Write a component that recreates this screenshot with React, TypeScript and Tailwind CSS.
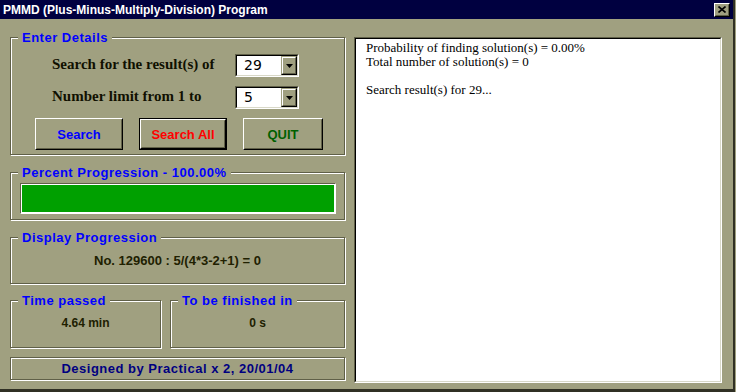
import type { ReactNode } from "react";

const sans = "font-['Liberation_Sans',Arial,sans-serif]";
const serif = "font-['Liberation_Serif','Times_New_Roman',serif]";

function Group({
  label,
  className,
  children,
}: {
  label?: string;
  className?: string;
  children?: ReactNode;
}) {
  return (
    <div
      className={`relative border border-[#606048] shadow-[inset_1px_1px_0_#fff,1px_1px_0_#fff] ${className ?? ""}`}
    >
      {label && (
        <span
          className={`absolute left-[7px] -top-[8px] bg-[#a0a080] px-[4px] text-[13px] leading-[15px] tracking-[0.5px] font-bold text-[#0000ff] whitespace-nowrap ${sans}`}
        >
          {label}
        </span>
      )}
      {children}
    </div>
  );
}

function Combo({ value }: { value: string }) {
  return (
    <div className="w-[64px] h-[23px] border border-t-[#606048] border-l-[#606048] border-b-white border-r-white">
      <div className="h-full flex border border-t-black border-l-black border-b-[#d8d8c8] border-r-[#d8d8c8] bg-white">
        <span className="flex-1 pl-[7px] text-[14px] leading-[19px] text-black font-['DejaVu_Sans',sans-serif]">
          {value}
        </span>
        <div className="w-[16px] h-full border border-t-[#a0a080] border-l-[#a0a080] border-b-black border-r-black">
          <div className="h-full flex items-center justify-center bg-[#a0a080] border border-t-white border-l-white border-b-[#606048] border-r-[#606048]">
            <svg width="7" height="4" viewBox="0 0 7 4">
              <polygon points="0,0 7,0 3.5,4" fill="#000" />
            </svg>
          </div>
        </div>
      </div>
    </div>
  );
}

function Button({
  text,
  color,
  width,
  isDefault,
}: {
  text: string;
  color: string;
  width: string;
  isDefault?: boolean;
}) {
  return (
    <div className={`${width} h-[32px] ${isDefault ? "border border-black" : ""}`}>
      <div className="h-full border border-t-white border-l-white border-b-black border-r-black">
        <div
          className={`h-full flex items-center justify-center border border-t-transparent border-l-transparent border-b-[#606048] border-r-[#606048] text-[13px] leading-[15px] font-bold ${sans} ${color}`}
        >
          {text}
        </div>
      </div>
    </div>
  );
}

export default function App() {
  return (
    <div className="w-[736px] h-[392px] bg-[#a0a080] overflow-hidden">
      <div className="w-[735px] h-[392px] border-r-2 border-b-[3px] border-[#303024] flex flex-col">
        {/* title bar */}
        <div className="h-[19px] bg-[#000040] flex items-center justify-between pl-[3px] pr-[3px]">
          <span className={`text-white text-[12px] leading-[14px] font-bold ${sans}`}>
            PMMD (Plus-Minus-Multiply-Division) Program
          </span>
          <div className="w-[16px] h-[14px] border border-t-white border-l-white border-b-black border-r-black">
            <div className="h-full flex items-center justify-center bg-[#a0a080] border border-t-transparent border-l-transparent border-b-[#606048] border-r-[#606048]">
              <svg width="8" height="7" viewBox="0 0 8 7">
                <path d="M0.5 0.5 L7.5 6.5 M7.5 0.5 L0.5 6.5" stroke="#000" strokeWidth="1.6" />
              </svg>
            </div>
          </div>
        </div>

        <div className="flex pt-[18px] pl-[10px]">
          {/* left column */}
          <div className="w-[335px] flex flex-col">
            <Group label="Enter Details" className="h-[118px] pt-[16px]">
              <div className="flex flex-col gap-[9px]">
                <div className="flex items-center h-[23px] pl-[41px]">
                  <span className={`w-[183px] pb-[3px] text-[15px] leading-[17px] font-bold text-[#101000] ${serif}`}>
                    Search for the result(s) of
                  </span>
                  <Combo value="29" />
                </div>
                <div className="flex items-center h-[23px] pl-[41px]">
                  <span className={`w-[183px] pb-[3px] text-[15px] leading-[17px] font-bold text-[#101000] ${serif}`}>
                    Number limit from 1 to
                  </span>
                  <Combo value="5" />
                </div>
                <div className="flex gap-[16px] pl-[24px]">
                  <Button text="Search" color="text-[#0000ff]" width="w-[88px]" />
                  <Button text="Search All" color="text-[#ff0000]" width="w-[88px]" isDefault />
                  <Button text="QUIT" color="text-[#006000]" width="w-[80px]" />
                </div>
              </div>
            </Group>

            <Group label="Percent Progression - 100.00%" className="h-[48px] mt-[17px] pt-[10px] pl-[9px]">
              <div className="w-[316px] h-[31px] border border-t-[#606048] border-l-[#606048] border-b-white border-r-white">
                <div className="h-full border border-white bg-[#00a000]" />
              </div>
            </Group>

            <Group label="Display Progression" className="h-[47px] mt-[17px] pt-[15px]">
              <div className={`text-center text-[13px] leading-[15px] font-bold text-[#202000] ${sans}`}>
                No. 129600 : 5/(4*3-2+1) = 0
              </div>
            </Group>

            <div className="flex gap-[9px] mt-[16px]">
              <Group label="Time passed" className="w-[151px] h-[48px] pt-[15px]">
                <div className={`text-center text-[12px] leading-[15px] font-bold text-[#202000] ${sans}`}>
                  4.64 min
                </div>
              </Group>
              <Group label="To be finished in" className="w-[175px] h-[48px] pt-[15px]">
                <div className={`text-center text-[12px] leading-[15px] font-bold text-[#202000] ${sans}`}>
                  0 s
                </div>
              </Group>
            </div>

            <Group className="h-[23px] mt-[9px] flex items-center justify-center">
              <span className={`text-[13px] leading-[15px] tracking-[0.5px] font-bold text-[#000080] ${sans}`}>
                Designed by Practical x 2, 20/01/04
              </span>
            </Group>
          </div>

          {/* output panel */}
          <div className="ml-[9px] w-[368px] h-[346px] border border-t-[#606048] border-l-[#606048] border-b-white border-r-white">
            <div
              className={`h-full bg-white border border-t-black border-l-black border-b-[#d8d8c8] border-r-[#d8d8c8] pt-[2px] pl-[10px] text-[13px] leading-[14px] text-black ${serif}`}
            >
              <div>Probability of finding solution(s) = 0.00%</div>
              <div>Total number of solution(s) = 0</div>
              <div>&nbsp;</div>
              <div>Search result(s) for 29...</div>
            </div>
          </div>
        </div>
      </div>
    </div>
  );
}
